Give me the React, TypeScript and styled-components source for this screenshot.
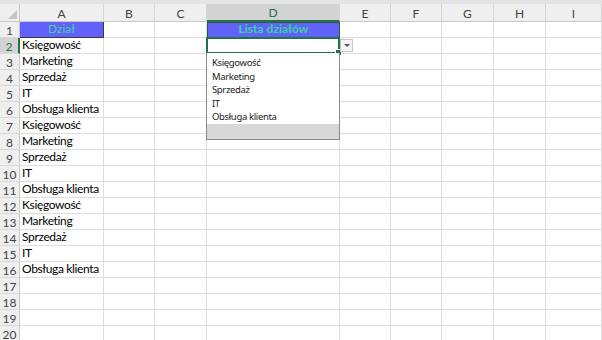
import React from "react";
import styled, { createGlobalStyle, css } from "styled-components";

const Global = createGlobalStyle`
  html, body { margin: 0; padding: 0; background: #ffffff; overflow: hidden; }
  body { font-family: "Lato", "Liberation Sans", sans-serif; }
`;

const COLS = [
  { name: "A", w: 84 },
  { name: "B", w: 51 },
  { name: "C", w: 52 },
  { name: "D", w: 133 },
  { name: "E", w: 51 },
  { name: "F", w: 51 },
  { name: "G", w: 52 },
  { name: "H", w: 52 },
  { name: "I", w: 56 },
];

const Page = styled.div`
  width: 602px;
  height: 340px;
  overflow: hidden;
  background: #ffffff;
`;

const TopStrip = styled.div`
  height: 4px;
  background: #e4e4e4;
`;

const Sheet = styled.div`
  display: grid;
  grid-template-columns: 20px ${COLS.map((c) => c.w + "px").join(" ")};
  grid-template-rows: 18px repeat(20, 16px);
`;

const Corner = styled.div`
  position: relative;
  background: #efefef;
  border-right: 1px solid #c8c8c8;
  border-bottom: 1px solid #c8c8c8;
  box-sizing: border-box;
  &::after {
    content: "";
    position: absolute;
    right: 2px;
    bottom: 2px;
    width: 0;
    height: 0;
    border-left: 9px solid transparent;
    border-bottom: 9px solid #c4c4c4;
  }
`;

const ColHeader = styled.div<{ $selected?: boolean }>`
  box-sizing: border-box;
  background: #efefef;
  border-right: 1px solid #d4d4d4;
  border-bottom: 1px solid #c8c8c8;
  color: #444444;
  font-family: "Lato", "Liberation Sans", sans-serif;
  font-size: 12px;
  display: flex;
  align-items: center;
  justify-content: center;
  padding-top: 1px;
  ${(p) =>
    p.$selected &&
    css`
      background: #d3d3d3;
      color: #217346;
      border-bottom: 2px solid #217346;
    `}
`;

const RowHeader = styled.div<{ $selected?: boolean }>`
  box-sizing: border-box;
  background: #efefef;
  border-right: 1px solid #c8c8c8;
  border-bottom: 1px solid #d8d8d8;
  color: #444444;
  font-family: "Lato", "Liberation Sans", sans-serif;
  font-size: 12px;
  display: flex;
  align-items: center;
  justify-content: center;
  padding-top: 1px;
  ${(p) =>
    p.$selected &&
    css`
      background: #d3d3d3;
      color: #217346;
      border-right: 2px solid #217346;
    `}
`;

const Cell = styled.div<{ $variant?: "title" | "titleBold" | "plain" }>`
  position: relative;
  box-sizing: border-box;
  border-right: 1px solid #dedede;
  border-bottom: 1px solid #dedede;
  font-family: "Lato", "Liberation Sans", sans-serif;
  font-size: 12px;
  letter-spacing: -0.35px;
  color: #000000;
  padding: 0 2px 1px;
  display: flex;
  align-items: flex-end;
  line-height: 14px;
  white-space: nowrap;
  ${(p) =>
    (p.$variant === "title" || p.$variant === "titleBold") &&
    css`
      background: #6262fb;
      color: #3cd49a;
      justify-content: center;
      letter-spacing: 0;
      border-right: 1px solid #3a3a3a;
      border-bottom: 1px solid #3a3a3a;
    `}
  ${(p) =>
    p.$variant === "titleBold" &&
    css`
      font-weight: 700;
      border: 1px solid #2d5a3a;
    `}
`;

const Selection = styled.div`
  position: absolute;
  left: -1px;
  top: -1px;
  right: -1px;
  bottom: -1px;
  border: 2px solid #217346;
  pointer-events: none;
  z-index: 2;
  &::after {
    content: "";
    position: absolute;
    right: -4px;
    bottom: -4px;
    width: 5px;
    height: 5px;
    background: #217346;
    border: 1px solid #ffffff;
  }
`;

const DropButton = styled.div`
  position: absolute;
  left: calc(100% + 1px);
  top: 1px;
  width: 13px;
  height: 13px;
  box-sizing: border-box;
  background: #f4f4f4;
  border: 1px solid #c6c6c6;
  display: flex;
  align-items: center;
  justify-content: center;
  z-index: 3;
`;

const Arrow = styled.div`
  width: 0;
  height: 0;
  border-left: 3px solid transparent;
  border-right: 3px solid transparent;
  border-top: 3px solid #555555;
`;

const DropList = styled.div`
  position: absolute;
  left: -1px;
  top: 100%;
  width: 134px;
  box-sizing: border-box;
  background: #ffffff;
  border: 1px solid #8a8a8a;
  border-top: none;
  z-index: 4;
  padding-top: 3px;
`;

const ListItem = styled.div`
  font-family: "Noto Sans", "DejaVu Sans", sans-serif;
  font-size: 9.5px;
  line-height: 13.5px;
  height: 13.5px;
  color: #1a1a1a;
  padding-left: 5px;
`;

const ListFooter = styled.div`
  height: 15px;
  background: #d8d8d8;
`;

const departments = ["Księgowość", "Marketing", "Sprzedaż", "IT", "Obsługa klienta"];

export default function App() {
  const rows: React.ReactNode[] = [];
  for (let r = 1; r <= 20; r++) {
    rows.push(
      <RowHeader key={`rh${r}`} $selected={r === 2}>
        {r}
      </RowHeader>
    );
    COLS.forEach((c) => {
      const key = `${c.name}${r}`;
      if (r === 1 && c.name === "A") {
        rows.push(
          <Cell key={key} $variant="title">
            Dział
          </Cell>
        );
      } else if (r === 1 && c.name === "D") {
        rows.push(
          <Cell key={key} $variant="titleBold">
            Lista działów
          </Cell>
        );
      } else if (c.name === "A" && r >= 2 && r <= 16) {
        rows.push(<Cell key={key}>{departments[(r - 2) % 5]}</Cell>);
      } else if (r === 2 && c.name === "D") {
        rows.push(
          <Cell key={key}>
            <Selection />
            <DropButton>
              <Arrow />
            </DropButton>
            <DropList>
              {departments.map((d) => (
                <ListItem key={d}>{d}</ListItem>
              ))}
              <ListFooter />
            </DropList>
          </Cell>
        );
      } else {
        rows.push(<Cell key={key} />);
      }
    });
  }

  return (
    <Page>
      <Global />
      <TopStrip />
      <Sheet>
        <Corner />
        {COLS.map((c) => (
          <ColHeader key={c.name} $selected={c.name === "D"}>
            {c.name}
          </ColHeader>
        ))}
        {rows}
      </Sheet>
    </Page>
  );
}
